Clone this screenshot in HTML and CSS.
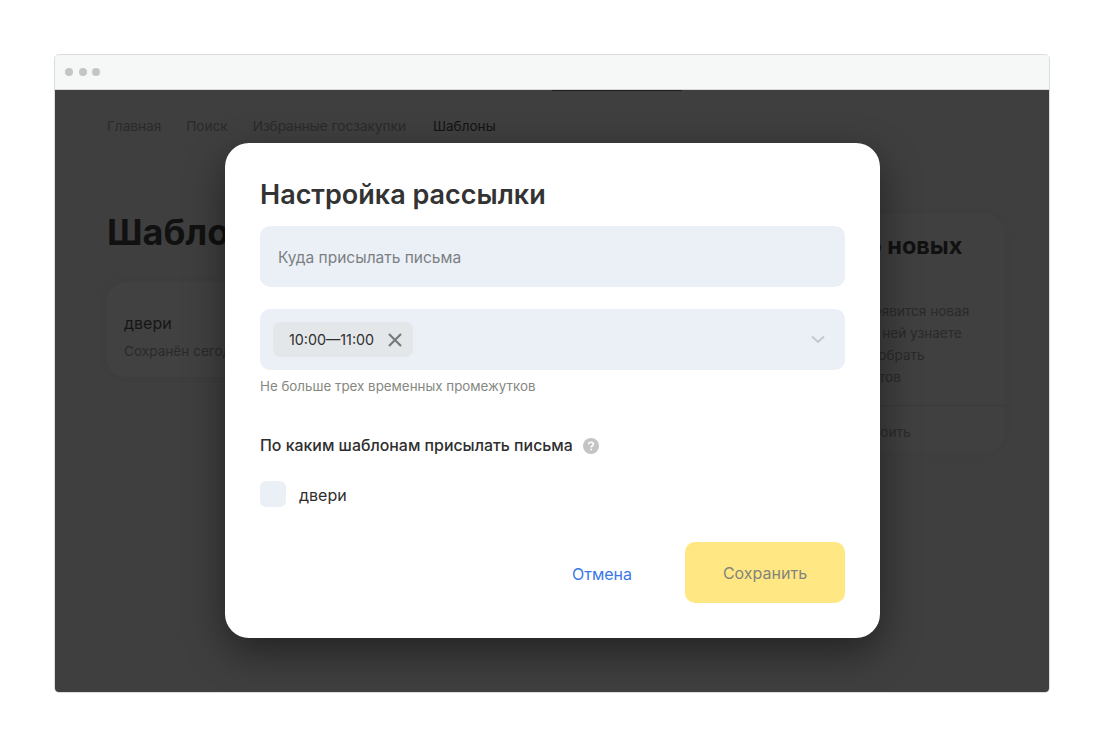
FILE: index.html
```html
<!DOCTYPE html>
<html lang="ru">

<head>
    <meta charset="UTF-8">
    <title>Настройка рассылки</title>
    <link rel="stylesheet" href="styles.css">
</head>

<body>
    <div class="window">
        <div class="titlebar">
            <span class="dot"></span>
            <span class="dot"></span>
            <span class="dot"></span>
        </div>

        <div class="screen">
            <div class="tabLine"></div>

            <nav class="nav">
                <a>Главная</a>
                <a>Поиск</a>
                <a>Избранные госзакупки</a>
                <a class="navActive">Шаблоны</a>
            </nav>

            <div class="content">
                <div class="mainCol">
                    <h1>Шаблоны</h1>
                    <div class="templateCard">
                        <div class="templateName">двери</div>
                        <div class="templateDate">Сохранён сегодня</div>
                    </div>
                </div>

                <div class="sideCard">
                    <h2>Рассылка о новых<br>закупках</h2>
                    <p>Когда на площадке появится новая<br>закупка по запросу, о ней узнаете<br>первым. Мы можем собрать<br>до двадцати результатов</p>
                    <div class="sideAction">Настроить</div>
                </div>
            </div>

            <div class="modal">
                <h3>Настройка рассылки</h3>

                <div class="field fieldEmail">Куда присылать письма</div>

                <div class="field fieldTime">
                    <span class="chip">
                        10:00—11:00
                        <svg width="14" height="14" viewBox="0 0 14 14">
                            <path d="M1 1L13 13M13 1L1 13" stroke="#77797a" stroke-width="2.2" fill="none" />
                        </svg>
                    </span>
                    <svg width="14" height="9" viewBox="0 0 14 9">
                        <path d="M1 1.5L7 7L13 1.5" stroke="#c6c8ca" stroke-width="2" fill="none" />
                    </svg>
                </div>
                <div class="hint">Не больше трех временных промежутков</div>

                <div class="sectionTitle">
                    По каким шаблонам присылать письма
                    <svg width="16" height="16" viewBox="0 0 16 16">
                        <circle cx="8" cy="8" r="8" fill="#c4c4c4" />
                        <path d="M5.6 6.2C5.7 4.9 6.7 4.2 8 4.2C9.4 4.2 10.4 5 10.4 6.2C10.4 7.7 8.2 7.8 8.2 9.4" stroke="#fff" stroke-width="1.6" fill="none" />
                        <circle cx="8.2" cy="11.6" r="1" fill="#fff" />
                    </svg>
                </div>

                <label class="checkRow">
                    <span class="checkBox"></span>
                    <span class="checkLabel">двери</span>
                </label>

                <div class="actions">
                    <a class="cancel">Отмена</a>
                    <button type="button" class="save">Сохранить</button>
                </div>
            </div>
        </div>
    </div>
</body>

</html>
```

FILE: styles.css
```css
html, body {
    margin: 0;
    height: 100%;
}

body {
    background-color: #fff;
    font-family: Inter, "Noto Sans", sans-serif;
    padding: 54px 54px 0 54px;
    box-sizing: border-box;
    overflow: hidden;
}

.window {
    width: 996px;
    height: 639px;
    box-sizing: border-box;
    border: 1px solid #dcdcdc;
    border-radius: 5px;
    overflow: hidden;
    display: flex;
    flex-direction: column;
}

.titlebar {
    height: 35px;
    flex: none;
    background-color: #f6f7f7;
    display: flex;
    align-items: center;
    gap: 5.5px;
    padding: 0 10px;
    box-sizing: border-box;
    border-bottom: 1px solid #d8d8d8;
}

.dot {
    width: 8px;
    height: 8px;
    border-radius: 50%;
    background-color: #c4c5c7;
}

.screen {
    position: relative;
    flex: 1;
    background-color: #3f3f3f;
    overflow: hidden;
}

.tabLine {
    position: absolute;
    left: 497px;
    top: 0;
    width: 130px;
    height: 1px;
    background-color: #1d1d1d;
}

.nav {
    display: flex;
    gap: 25px;
    padding: 27px 52px 0 52px;
    font-size: 13.6px;
    line-height: 18px;
    color: #2a2a2a;
}

.navActive {
    margin-left: 2px;
    color: #131313;
}

.content {
    display: flex;
    justify-content: space-between;
    padding: 0 44px 0 52px;
}

h1 {
    margin: 75px 0 0 0;
    font-size: 36px;
    line-height: 44px;
    font-weight: 700;
    color: #111;
}

.templateCard {
    width: 300px;
    height: 95px;
    box-sizing: border-box;
    margin-top: 28px;
    margin-left: -1px;
    padding: 30px 18px 0 18px;
    border-radius: 20px;
    background-color: #414141;
    box-shadow: 0 0 8px rgba(0, 0, 0, 0.05);
}

.templateName {
    font-size: 16px;
    line-height: 22px;
    color: #161616;
}

.templateDate {
    margin-top: 7px;
    font-size: 13.6px;
    line-height: 20px;
    color: #2a2a2a;
    white-space: nowrap;
}

.sideCard {
    width: 300px;
    height: 240px;
    box-sizing: border-box;
    margin-top: 78px;
    padding: 18px 0 0 28px;
    border-radius: 20px;
    background-color: #404040;
    box-shadow: 0 0 6px rgba(0, 0, 0, 0.05);
}

h2 {
    margin: 0;
    padding-left: 12px;
    font-size: 23.5px;
    line-height: 30px;
    font-weight: 700;
    color: #111;
    white-space: nowrap;
}

.sideCard p {
    margin: 9px 0 0 0;
    font-size: 13.6px;
    line-height: 22px;
    color: #2a2a2a;
    white-space: nowrap;
}

.sideAction {
    margin: 17px 0 0 -28px;
    padding: 17px 0 0 135px;
    border-top: 1px solid #3a3a3a;
    font-size: 13.6px;
    line-height: 18px;
    color: #2a2a2a;
}

.modal {
    position: absolute;
    left: 170px;
    top: 53px;
    width: 655px;
    height: 495px;
    box-sizing: border-box;
    padding: 34px 35px 0 35px;
    background-color: #fff;
    border-radius: 24px;
    box-shadow: 0 14px 40px rgba(0, 0, 0, 0.45);
}

h3 {
    margin: 0;
    font-size: 27px;
    line-height: 36px;
    font-weight: 600;
    color: #333;
}

.field {
    height: 61px;
    box-sizing: border-box;
    background-color: #ebf0f7;
    border-radius: 10px;
    display: flex;
    align-items: center;
}

.fieldEmail {
    margin-top: 13px;
    padding: 2px 18px 0 18px;
    font-size: 15.5px;
    color: #7c7f82;
}

.fieldTime {
    margin-top: 22px;
    padding: 0 20px 0 13px;
    justify-content: space-between;
}

.chip {
    height: 35px;
    box-sizing: border-box;
    padding: 0 11px 0 16px;
    display: flex;
    align-items: center;
    gap: 14px;
    background-color: #e4e7ea;
    border-radius: 7px;
    font-size: 14.3px;
    color: #2f2f2f;
}

.hint {
    margin-top: 7px;
    font-size: 13.35px;
    line-height: 18px;
    color: #85887f;
}

.sectionTitle {
    margin-top: 40px;
    display: flex;
    align-items: center;
    gap: 10px;
    font-size: 15.9px;
    line-height: 22px;
    font-weight: 500;
    color: #2f2f2f;
}

.checkRow {
    margin-top: 24px;
    display: flex;
    align-items: center;
    gap: 13px;
    font-size: 16px;
    color: #2f2f2f;
}

.checkLabel {
    padding-top: 2px;
}

.checkBox {
    width: 26px;
    height: 26px;
    background-color: #ebf0f7;
    border-radius: 6px;
}

.actions {
    margin-top: 35px;
    display: flex;
    justify-content: flex-end;
    align-items: center;
    gap: 53px;
}

.cancel {
    padding-top: 2px;
    font-size: 16px;
    color: #3a78e8;
}

.save {
    width: 160px;
    height: 61px;
    padding-top: 2px;
    border: none;
    border-radius: 10px;
    background-color: #ffe884;
    font-family: inherit;
    font-size: 16px;
    color: #85847a;
}
```
